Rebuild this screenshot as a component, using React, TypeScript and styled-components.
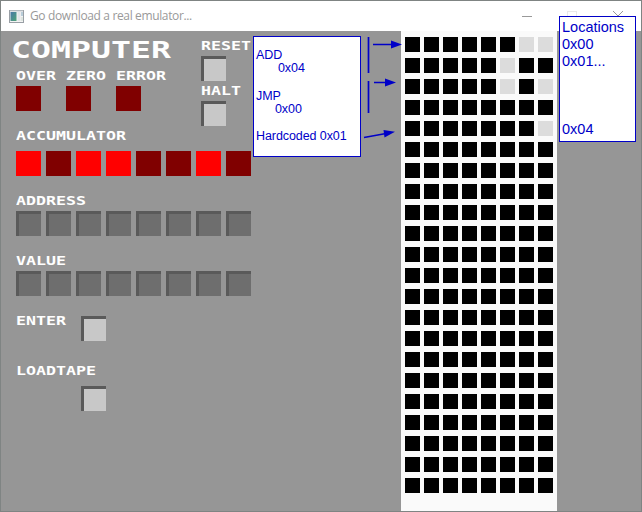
import React from "react";
import styled, { createGlobalStyle } from "styled-components";

const GlobalStyle = createGlobalStyle`
  * { box-sizing: border-box; }
  body { margin: 0; overflow: hidden; background: #969696; }
`;

const INK = "#0000c8";

const Window = styled.div`
  position: relative;
  display: flex;
  flex-direction: column;
  width: 642px;
  height: 512px;
  border: 1px solid #7f8483;
  background: #969696;
  overflow: hidden;
`;

const TitleBar = styled.header`
  display: flex;
  align-items: center;
  flex: none;
  height: 30px;
  padding-left: 8px;
  background: #fff;
`;

const Caption = styled.span`
  margin-left: 6px;
  flex: 1;
  font: 12px/16px "Open Sans", "Noto Sans", sans-serif;
  letter-spacing: -0.36px;
  color: #999;
  white-space: nowrap;
`;

const WindowControls = styled.svg`
  flex: none;
  width: 122px;
  height: 29px;
`;

const Body = styled.main`
  display: flex;
  flex: 1;
`;

const Panel = styled.section`
  width: 400px;
  padding-left: 15px;
`;

const TopArea = styled.div`
  display: flex;
  height: 100px;
  padding-top: 10px;
`;

const Status = styled.div`
  width: 185px;
`;

const Heading = styled.h1`
  width: max-content;
  height: 17px;
  margin: 0 0 13px -5px;
  font: bold 23.5px/18px "DejaVu Sans Mono", monospace;
  color: #fff;
  transform: scaleX(1.413);
  transform-origin: left;
`;

const Label = styled.div`
  width: max-content;
  height: 9px;
  font: bold 12px/10px "DejaVu Sans Mono", monospace;
  color: #fff;
  transform: scaleX(1.384);
  transform-origin: left;
`;

const LampRow = styled.div`
  display: flex;
`;

const LampColumn = styled.div`
  display: flex;
  flex-direction: column;
  gap: 6px;
  width: 50px;
`;

const Lamp = styled.div<{ $on?: boolean }>`
  width: 25px;
  height: 25px;
  background: ${(p) => (p.$on ? "#ff0000" : "#800000")};
`;

const Key = styled.button<{ $dim?: boolean }>`
  display: block;
  width: 25px;
  height: 25px;
  padding: 0;
  border: solid #5a5a5a;
  border-width: 3px 0 0 3px;
  background: ${(p) => (p.$dim ? "#6e6e6e" : "#c8c8c8")};
`;

const Controls = styled.div`
  display: flex;
  flex-direction: column;
`;

const Control = styled.div`
  display: flex;
  flex-direction: column;
  gap: 6px;
  height: 45px;
`;

const Register = styled.div<{ $gap: number; $height: number }>`
  display: flex;
  flex-direction: column;
  gap: ${(p) => p.$gap}px;
  height: ${(p) => p.$height}px;
`;

const Bits = styled.div`
  display: flex;
  gap: 5px;
`;

const Command = styled.div<{ $drop?: boolean }>`
  display: grid;
  grid-template-columns: 65px 25px;
  height: 50px;
  ${Key} { margin-top: ${(p) => (p.$drop ? 20 : 0)}px; }
`;

const Tape = styled.section`
  display: grid;
  grid-template-columns: repeat(8, 15px);
  grid-auto-rows: 15px;
  align-content: start;
  gap: 6px 4px;
  width: 156px;
  padding: 6px 4px;
  background: #fafafa;
`;

const Hole = styled.i<{ $set: boolean }>`
  background: ${(p) => (p.$set ? "#dcdcdc" : "#000")};
`;

const Note = styled.aside`
  position: absolute;
  border: 1px solid ${INK};
  background: #fff;
  color: ${INK};
  white-space: nowrap;
  font-family: "Liberation Sans", Arial, sans-serif;
`;

const ProgramNote = styled(Note)`
  left: 252px;
  top: 35px;
  width: 108px;
  height: 121px;
  padding: 12px 0 0 2px;
  font-size: 12.5px;
  letter-spacing: -0.08px;
  line-height: 13px;
`;

const LocationNote = styled(Note)`
  left: 558px;
  top: 15px;
  width: 77px;
  height: 126px;
  padding: 2px 0 0 2px;
  font-size: 14.5px;
  line-height: 17px;
`;

const NoteLine = styled.div<{ $indent?: number; $space?: number }>`
  padding-left: ${(p) => p.$indent ?? 0}px;
  margin-top: ${(p) => p.$space ?? 0}px;
`;

const Arrows = styled.svg`
  position: absolute;
  left: 359px;
  top: 29px;
  width: 45px;
  height: 120px;
`;

const accumulator = [1, 0, 1, 1, 0, 0, 1, 0];
const memory = [3, 4, 5, 0, 1, ...Array<number>(17).fill(0)];
const bitsOf = (n: number) => Array.from({ length: 8 }, (_, i) => ((n >> (7 - i)) & 1) === 1);

const AppIcon = () => (
  <svg width="15" height="13" viewBox="0 0 15 13">
    <defs>
      <linearGradient id="screen" x1="0" y1="0" x2="1" y2="1">
        <stop offset="0" stopColor="#4a78a8" />
        <stop offset="1" stopColor="#4fa477" />
      </linearGradient>
    </defs>
    <rect x=".5" y=".5" width="14" height="12" fill="#f4f4f4" stroke="#999fa5" />
    <path d="M1 1h13" stroke="#c9ced3" />
    <rect x="1.5" y="2" width="6" height="9" fill="url(#screen)" />
    <rect x="8.5" y="2" width="3" height="9" fill="#e3e5e8" />
    <rect x="12" y="2" width="2" height="4" fill="#b9cdd9" />
    <rect x="12" y="7" width="2" height="4" fill="#dde5df" />
  </svg>
);

export default function App() {
  return (
    <>
      <GlobalStyle />
      <Window>
        <TitleBar>
          <AppIcon />
          <Caption>Go download a real emulator...</Caption>
          <WindowControls viewBox="519 1 122 29" fill="none">
            <path d="M522 15.5h10" stroke="#999" />
            <rect x="567.5" y="10.5" width="9" height="9" stroke="#e9e9e9" />
            <path d="M613 10l10 10M623 10l-10 10" stroke="#999" />
          </WindowControls>
        </TitleBar>
        <Body>
          <Panel>
            <TopArea>
              <Status>
                <Heading>COMPUTER</Heading>
                <LampRow>
                  {["OVER", "ZERO", "ERROR"].map((name) => (
                    <LampColumn key={name}>
                      <Label>{name}</Label>
                      <Lamp />
                    </LampColumn>
                  ))}
                </LampRow>
              </Status>
              <Controls>
                {["RESET", "HALT"].map((name) => (
                  <Control key={name}>
                    <Label>{name}</Label>
                    <Key />
                  </Control>
                ))}
              </Controls>
            </TopArea>
            <Register $gap={11} $height={65}>
              <Label>ACCUMULATOR</Label>
              <Bits>{accumulator.map((bit, i) => <Lamp key={i} $on={bit === 1} />)}</Bits>
            </Register>
            {["ADDRESS", "VALUE"].map((name) => (
              <Register key={name} $gap={6} $height={60}>
                <Label>{name}</Label>
                <Bits>{bitsOf(0).map((_, i) => <Key key={i} $dim />)}</Bits>
              </Register>
            ))}
            <Command>
              <Label>ENTER</Label>
              <Key />
            </Command>
            <Command $drop>
              <Label>LOADTAPE</Label>
              <Key />
            </Command>
          </Panel>
          <Tape>
            {memory.flatMap((byte, row) =>
              bitsOf(byte).map((set, col) => <Hole key={`${row}-${col}`} $set={set} />)
            )}
          </Tape>
        </Body>
        <ProgramNote>
          <NoteLine>ADD</NoteLine>
          <NoteLine $indent={22}>0x04</NoteLine>
          <NoteLine $space={15}>JMP</NoteLine>
          <NoteLine $indent={19}>0x00</NoteLine>
          <NoteLine $space={14}>Hardcoded 0x01</NoteLine>
        </ProgramNote>
        <LocationNote>
          <NoteLine>Locations</NoteLine>
          <NoteLine>0x00</NoteLine>
          <NoteLine>0x01...</NoteLine>
          <NoteLine $space={51}>0x04</NoteLine>
        </LocationNote>
        <Arrows viewBox="360 30 45 120" stroke={INK} strokeWidth="1.7" fill={INK}>
          <path d="M368.5 37v36M368.5 81v32M373 44.5h20M374 82.5h12M364 137.5l22-4" />
          <path stroke="none" d="M391 40.5l11 4-11 4zM385 78.5l11 4-11 4zM383.5 130l11.500 1.800-10.500 5.700z" />
        </Arrows>
      </Window>
    </>
  );
}
